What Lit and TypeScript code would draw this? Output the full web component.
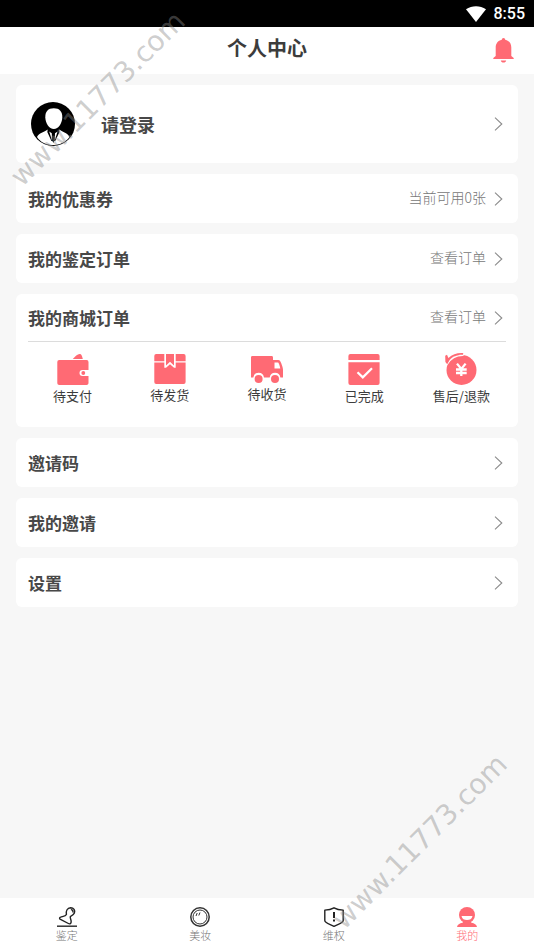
import { LitElement, html, svg, css, TemplateResult } from "lit";
import { customElement } from "lit/decorators.js";

const chevron = html`<svg class="chevron" width="9" height="14" viewBox="0 0 9 14" aria-hidden="true">
  <path d="M1 .7 7.8 7 1 13.3" fill="none" stroke="#8c8c8c" stroke-width="1.1" />
</svg>`;

interface OrderState {
  label: string;
  height: number;
  art: TemplateResult;
}

const orderStates: OrderState[] = [
  {
    label: "待支付",
    height: 32,
    art: svg`<path fill="currentColor" d="M15.8 6C18 3.4 20.6 1.2 22.6 1c1.600-.2 2.400 1.200 3.200 5z"/>
      <path fill="currentColor" d="M2.200 7H29.600A1.900 1.900 0 0 1 31.500 8.900V17H25.500A3 3 0 0 0 25.500 23H31.500V30.200A1.900 1.900 0 0 1 29.600 32H2.200A1.900 1.900 0 0 1 .3 30.200V8.900A1.900 1.900 0 0 1 2.200 7z"/>
      <circle fill="currentColor" cx="26.300" cy="20" r="1.900"/>`,
  },
  {
    label: "待发货",
    height: 31,
    art: svg`<path fill="currentColor" d="M2.200 1H10.300V8.200H.3V3A2 2 0 0 1 2.200 1zM21.700 1H29.700A2 2 0 0 1 31.600 3V8.200H21.700zM12 1H20V12.400L16 8.800 12 12.400z"/>
      <path fill="currentColor" d="M.3 9.500H10.300V14.800H12L16 11.300 20 14.800H21.700V9.500H31.600V29A2 2 0 0 1 29.700 31H2.200A2 2 0 0 1 .3 29z"/>`,
  },
  {
    label: "待收货",
    height: 30,
    art: svg`<path fill="currentColor" fill-rule="evenodd" d="M1.500 3H20.600A1.400 1.400 0 0 1 22 4.400V7H27.300C28.900 7 30.100 9 31 12.500 31.700 14.500 32 15.400 32 17V24.500H29.400A5.400 5.400 0 0 0 18.700 24.500H13A5.400 5.400 0 0 0 2.300 24.500H0V4.400A1.400 1.400 0 0 1 1.500 3zM23.500 9.400V15.400H29.300C28.700 12.600 28 10.200 27.200 9.400z"/>
      <circle fill="currentColor" cx="7.600" cy="26" r="4"/><circle fill="currentColor" cx="24" cy="26" r="4"/>`,
  },
  {
    label: "已完成",
    height: 32,
    art: svg`<path fill="currentColor" d="M2.400 1H29.600A2 2 0 0 1 31.600 3V7H.4V3A2 2 0 0 1 2.400 1zM.4 9.300H31.600V30A2 2 0 0 1 29.600 32H2.400A2 2 0 0 1 .4 30z"/>
      <path fill="none" stroke="#fff" stroke-width="2.200" d="M9.500 19.200 14.800 24.400 24 15.200"/>`,
  },
  {
    label: "售后/退款",
    height: 32,
    art: svg`<circle fill="currentColor" cx="16.500" cy="17" r="15"/>
      <path fill="none" stroke="#fff" stroke-width="1.400" d="M2 11.500C6 4.800 11 2.200 18.500 2.400"/>
      <path fill="currentColor" d="M.2 2.800 2 1.800 3.400 5C7.500 1.500 12.500-.3 18.300.2L18 1.800C12 1.500 7 3.800 4.500 7.300L2.200 11.200.4 9z"/>
      <path fill="none" stroke="#fff" stroke-width="2.300" d="M12 10.600 16.300 16 20.600 10.600M16.300 15.500V23M11 16.500H21.700M11 20H21.700"/>`,
  },
];

interface Tab {
  label: string;
  active?: boolean;
  art: TemplateResult;
}

const tabs: Tab[] = [
  {
    label: "鉴定",
    art: svg`<path fill="none" stroke="#222" stroke-width="1.400" stroke-linejoin="round" d="M9.400 7.400C8.800 3.600 10.300 1 13.600 .8 16.800 .8 18.400 3.400 17.400 6 16.700 7.800 15 8.700 13.300 9.600 12.900 11.400 14.600 13.400 14.100 15.400 13.800 16.900 12.600 17.200 11.400 16.500L3 12.100C2.200 11.400 2.600 10.400 3.600 10.100 5.600 9.400 8.600 9.400 9.400 7.400zM13.900 2.600C15.400 2.600 16.300 4 15.800 5.400"/>
      <path stroke="#333" stroke-width="1.500" d="M0 19.200H20"/>`,
  },
  {
    label: "美妆",
    art: svg`<g fill="none" stroke="#333"><circle cx="10" cy="10" r="9.200" stroke-width="1.500"/><circle cx="10" cy="10" r="7"/>
      <path d="M7.200 6 6 9M10 5.500 8.800 8.500"/></g>`,
  },
  {
    label: "维权",
    art: svg`<path fill="none" stroke="#222" stroke-width="1.400" stroke-linejoin="round" d="M10 .8C12.500 2.300 15.500 3 19.200 3.100V13.500C19.200 16 14.500 17 10 19.300 5.500 17 .8 16 .8 13.500V3.100C4.500 3 7.500 2.300 10 .8z"/>
      <path stroke="#222" stroke-width="2" d="M10 5V11M10 12.600V14.400"/>`,
  },
  {
    label: "我的",
    active: true,
    art: svg`<circle fill="currentColor" cx="10" cy="8" r="8"/>
      <path fill="#fff" d="M4.500 9H15.500C14.800 12 12.800 13 10 13S5.200 12 4.500 9z"/>
      <path fill="currentColor" d="M6.500 14.500H13.500L14.500 15.800C17.500 16.400 19.500 17.500 20 20H0C.5 17.500 2.500 16.400 5.500 15.800z"/>`,
  },
];

@customElement("app-root")
export class AppRoot extends LitElement {
  static styles = css`
    :host {
      display: flex;
      flex-direction: column;
      position: relative;
      min-height: 100vh;
      overflow: hidden;
      background: #f7f7f7;
      color: #3c3c3c;
      font-family: "Noto Sans CJK SC", sans-serif;
    }
    * {
      box-sizing: border-box;
    }
    button {
      margin: 0;
      padding: 0;
      border: 0;
      background: none;
      font: inherit;
      color: inherit;
      text-align: left;
      cursor: pointer;
    }
    svg {
      display: block;
      flex: none;
    }
    .status {
      display: flex;
      align-items: center;
      justify-content: flex-end;
      gap: 8px;
      height: 27px;
      padding-right: 9px;
      background: #000;
      color: #fff;
      font: 500 16px/27px Roboto, sans-serif;
    }
    .header {
      display: grid;
      grid-template-columns: 48px 1fr 48px;
      align-items: start;
      height: 47px;
      padding: 0 7px;
      background: #fff;
    }
    h1 {
      grid-column: 2;
      margin: 0;
      font-size: 20px;
      font-weight: 700;
      line-height: 41px;
      text-align: center;
    }
    .bell {
      display: grid;
      place-items: center;
      height: 46px;
      color: #ff6a74;
    }
    main {
      flex: 1;
      display: flex;
      flex-direction: column;
      gap: 11px;
      padding: 11px 16px;
    }
    .card {
      border-radius: 6px;
      background: #fff;
    }
    .row {
      display: flex;
      align-items: center;
      gap: 8px;
      width: 100%;
      height: 49px;
      padding: 0 15px 0 12px;
    }
    .profile {
      height: 78px;
      padding-left: 15px;
    }
    .name {
      flex: 1;
      padding-left: 18px;
      font-size: 18px;
      font-weight: 700;
      color: #484848;
    }
    .label {
      flex: 1;
      font-size: 17px;
      font-weight: 700;
      color: #484848;
    }
    .note {
      padding-bottom: 3px;
      font-size: 14px;
      font-weight: 300;
      color: #777;
    }
    .orders .row {
      height: 47px;
    }
    .divider {
      height: 1px;
      margin: 0 12px;
      background: #dcdcdc;
    }
    .states {
      display: grid;
      grid-template-columns: repeat(5, 1fr);
      align-items: start;
      height: 85px;
      padding: 11px 8px 0;
    }
    .state {
      display: flex;
      flex-direction: column;
      align-items: center;
      font-size: 13px;
      line-height: 20px;
      white-space: nowrap;
    }
    .state svg {
      color: #ff6a74;
    }
    .state span {
      margin-top: 1px;
    }
    nav {
      display: grid;
      grid-template-columns: repeat(4, 1fr);
      height: 51px;
      background: #fff;
    }
    .tab {
      display: flex;
      flex-direction: column;
      align-items: center;
      padding-top: 9px;
      color: #777;
      font-size: 11px;
      font-weight: 300;
      line-height: 16px;
      text-decoration: none;
    }
    .active {
      color: #ff6a74;
    }
    .mark {
      position: absolute;
      width: 240px;
      height: 34px;
      color: rgba(138, 138, 138, 0.43);
      font: 28px/34px "DejaVu Sans", sans-serif;
      text-align: center;
      white-space: nowrap;
      transform: rotate(-45deg);
      pointer-events: none;
    }
    .mark-top {
      top: 82px;
      left: -22px;
    }
    .mark-bottom {
      right: -6px;
      bottom: 90px;
    }
  `;

  private row(label: string, note = "") {
    return html`<button class="row">
      <span class="label">${label}</span>
      ${note ? html`<span class="note">${note}</span>` : ""}
      ${chevron}
    </button>`;
  }

  render() {
    return html`
      <div class="status">
        <svg width="20" height="16" viewBox="0 0 20 16" aria-hidden="true">
          <path fill="#fff" d="M0 3.300C6-.9 14-.9 20 3.300L10 16z" />
        </svg>
        <span>8:55</span>
      </div>
      <header class="header">
        <h1>个人中心</h1>
        <button class="bell" aria-label="消息">
          <svg width="21" height="25" viewBox="0 0 21 25" aria-hidden="true">
            <path fill="currentColor" d="M10.500 0C11.500 0 12.100.8 12.200 1.700 16.200 2.600 18.300 5.700 18.300 9.500V18L20.700 20V21H.3V20L2.700 18V9.500C2.700 5.700 4.800 2.600 8.800 1.700 8.900.8 9.500 0 10.500 0zM7.800 22.500H13.200C12.800 24 12 24.600 10.500 24.600S8.200 24 7.800 22.500z" />
          </svg>
        </button>
      </header>
      <main>
        <section class="card">
          <button class="row profile">
            <svg width="44" height="44" viewBox="0 0 44 44" aria-hidden="true">
              <circle cx="22" cy="22" r="22" fill="#000" />
              <path fill="#fff" d="M22.800 6.200C28.500 6.200 31.500 9.500 31.300 15.500 31 21.500 27.500 27 22.800 27S14.600 21.500 14.300 15.500C14.100 9.500 17 6.200 22.800 6.200z" />
              <path fill="#fff" d="M16.500 27.500 22.300 41 28.500 27.500C30.500 29.800 36.500 30.500 38.500 35 34.500 40.500 28.500 43 22 43S9.500 40.500 6 35C8 30.500 14.500 29.800 16.500 27.500z" />
              <path fill="#000" d="M17 26.500 22.300 30 28 26.500 28.500 30 24.200 39H20.400L16.300 30z" />
              <path fill="#fff" d="M18.200 29.500 20.800 31.300 21 38.500zM26.600 29.500 24 31.300 23.700 38.500z" />
            </svg>
            <span class="name">请登录</span>
            ${chevron}
          </button>
        </section>
        <section class="card">${this.row("我的优惠券", "当前可用0张")}</section>
        <section class="card">${this.row("我的鉴定订单", "查看订单")}</section>
        <section class="card orders">
          ${this.row("我的商城订单", "查看订单")}
          <div class="divider"></div>
          <div class="states">
            ${orderStates.map(
              (s) => html`<button class="state">
                <svg width="32" height=${s.height} viewBox="0 0 32 ${s.height}" aria-hidden="true">${s.art}</svg>
                <span>${s.label}</span>
              </button>`
            )}
          </div>
        </section>
        <section class="card">${this.row("邀请码")}</section>
        <section class="card">${this.row("我的邀请")}</section>
        <section class="card">${this.row("设置")}</section>
      </main>
      <nav>
        ${tabs.map(
          (t) => html`<a class="tab ${t.active ? "active" : ""}" href="#">
            <svg width="20" height="20" viewBox="0 0 20 20" aria-hidden="true">${t.art}</svg>
            <span>${t.label}</span>
          </a>`
        )}
      </nav>
      <div class="mark mark-top">www.11773.com</div>
      <div class="mark mark-bottom">www.11773.com</div>
    `;
  }
}
